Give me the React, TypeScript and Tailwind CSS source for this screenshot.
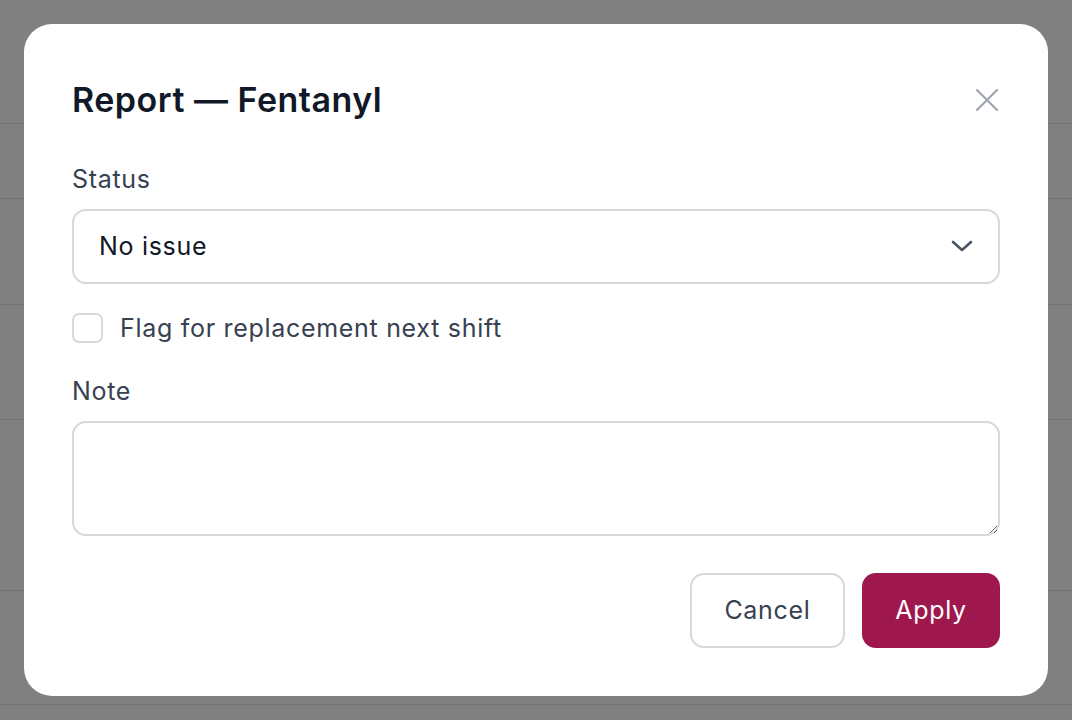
import { useState } from 'react';

const rows = [124, 75, 106, 115, 171, 114, 40];

function Backdrop() {
  return (
    <div className="w-full">
      {rows.map((h, i) => (
        <div key={i} className="border-b border-[#727272]" style={{ height: h }} />
      ))}
    </div>
  );
}

export default function App() {
  const [status, setStatus] = useState('none');
  const [flag, setFlag] = useState(false);
  const [note, setNote] = useState('');

  return (
    <div
      className="relative h-[720px] w-[1072px] overflow-hidden bg-[#808080]"
      style={{ fontFamily: 'Inter, "Noto Sans", sans-serif' }}
    >
      <Backdrop />
      <div className="absolute inset-0 p-6">
        <div className="flex h-full flex-col rounded-[28px] bg-white px-12 pt-[54px] pb-[48px]">
          <div className="flex items-center justify-between">
            <h2 className="text-[34px] leading-[44px] font-semibold tracking-[0.5px] text-[#111827]">
              Report — Fentanyl
            </h2>
            <button className="mr-[1px] flex h-6 w-6 items-center justify-center text-[#9ca3af]">
              <svg width="22" height="22" viewBox="0 0 22 22" fill="none" stroke="currentColor" strokeWidth="2" strokeLinecap="round">
                <path d="M1 1 21 21M21 1 1 21" />
              </svg>
            </button>
          </div>

          <label className="mt-[41px] block text-[25px] leading-[32px] tracking-[0.7px] text-[#374151]">Status</label>
          <div className="relative mt-[14px]">
            <select
              value={status}
              onChange={(e) => setStatus(e.target.value)}
              className="h-[75px] w-full appearance-none rounded-[14px] border-2 border-[#d5d8dd] bg-white pl-[25px] text-[25px] tracking-[0.7px] text-[#111827] outline-none"
            >
              <option value="none">No issue</option>
              <option value="low">Low stock</option>
              <option value="expired">Expired</option>
              <option value="missing">Missing</option>
            </select>
            <svg className="pointer-events-none absolute top-[30px] right-[27px] text-[#4b5563]" width="22" height="14" viewBox="0 0 22 14" fill="none" stroke="currentColor" strokeWidth="2.6" strokeLinecap="round" strokeLinejoin="round">
              <path d="M2 3 11 11 20 3" />
            </svg>
          </div>

          <label className="mt-[28px] flex cursor-pointer items-center gap-[17px]">
            <input
              type="checkbox"
              checked={flag}
              onChange={(e) => setFlag(e.target.checked)}
              className="h-[30px] w-[31px] appearance-none rounded-[7px] border-2 border-[#d5d8dd] bg-white checked:border-[#9e174d] checked:bg-[#9e174d]"
            />
            <span className="text-[25px] leading-[32px] tracking-[0.7px] text-[#374151]">Flag for replacement next shift</span>
          </label>

          <label className="mt-[31px] block text-[25px] leading-[32px] tracking-[0.7px] text-[#374151]">Note</label>
          <textarea
            value={note}
            onChange={(e) => setNote(e.target.value)}
            className="mt-[14px] h-[115px] w-full rounded-[14px] border-2 border-[#d5d8dd] bg-white px-[25px] py-[18px] text-[25px] text-[#111827] outline-none"
          />

          <div className="mt-auto flex justify-end gap-[17px]">
            <button className="h-[75px] w-[155px] rounded-[14px] border-2 border-[#d5d8dd] bg-white text-[25px] tracking-[0.7px] text-[#374151]">
              Cancel
            </button>
            <button className="h-[75px] w-[138px] rounded-[14px] bg-[#9e174d] text-[25px] tracking-[0.7px] text-white">
              Apply
            </button>
          </div>
        </div>
      </div>
    </div>
  );
}
